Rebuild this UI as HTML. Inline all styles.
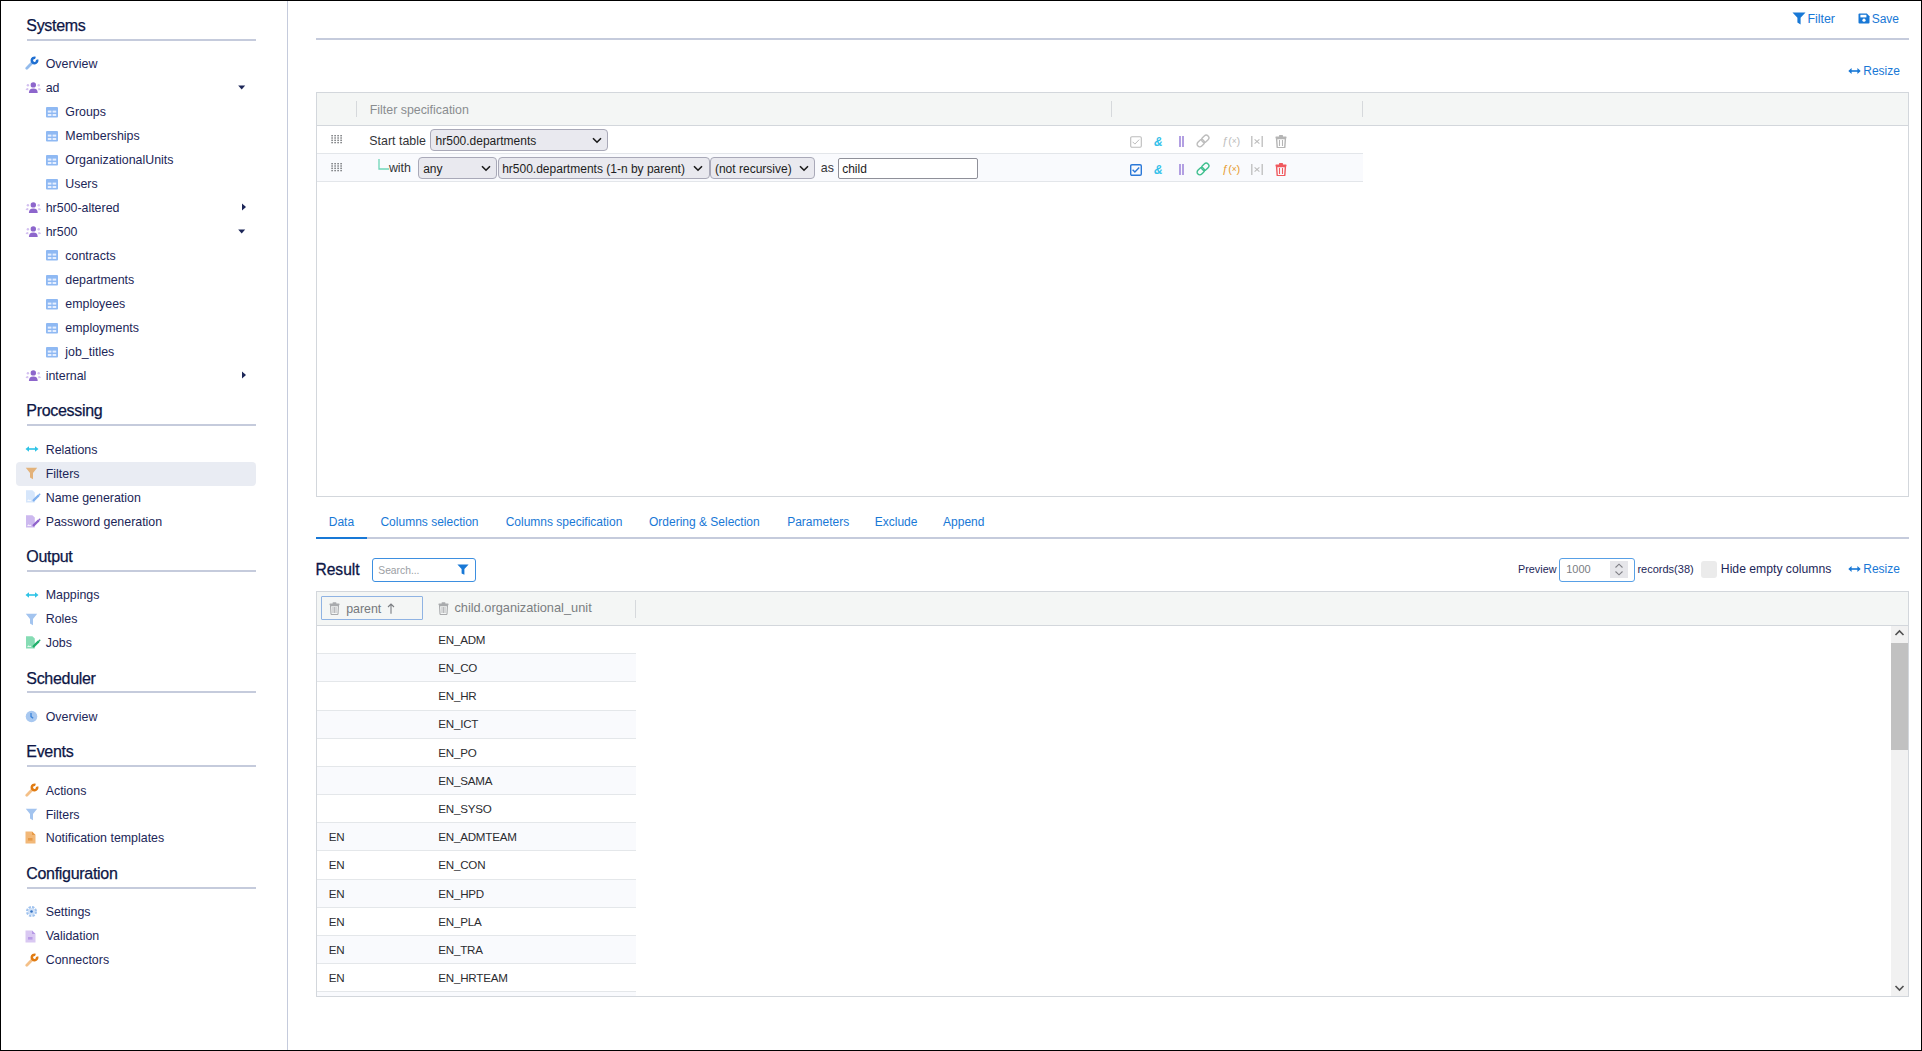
<!DOCTYPE html>
<html><head><meta charset="utf-8">
<style>
*{box-sizing:border-box;margin:0;padding:0}
html,body{width:1922px;height:1051px;overflow:hidden;background:#fff}
body{font-family:"Liberation Sans",sans-serif;position:relative}
.t{position:absolute;white-space:nowrap;line-height:1}
.r{position:absolute;display:block}
.frame{position:absolute;left:0;top:0;width:1922px;height:1051px;border:1px solid #000;z-index:50}
</style></head><body>
<div class="r" style="left:287px;top:0px;width:1px;height:1051px;background:#c5cbdc"></div>
<div class="t " style="left:26.28px;top:17.96px;font-size:16px;color:#0d1646;letter-spacing:-0.3px;-webkit-text-stroke:0.25px #0d1646">Systems</div>
<div class="r" style="left:27px;top:39px;width:229px;height:2px;background:#c5cbdc"></div>
<div class="t " style="left:26.28px;top:402.96px;font-size:16px;color:#0d1646;letter-spacing:-0.3px;-webkit-text-stroke:0.25px #0d1646">Processing</div>
<div class="r" style="left:27px;top:424px;width:229px;height:2px;background:#c5cbdc"></div>
<div class="t " style="left:26.28px;top:548.76px;font-size:16px;color:#0d1646;letter-spacing:-0.3px;-webkit-text-stroke:0.25px #0d1646">Output</div>
<div class="r" style="left:27px;top:570px;width:229px;height:2px;background:#c5cbdc"></div>
<div class="t " style="left:26.28px;top:670.66px;font-size:16px;color:#0d1646;letter-spacing:-0.3px;-webkit-text-stroke:0.25px #0d1646">Scheduler</div>
<div class="r" style="left:27px;top:691px;width:229px;height:2px;background:#c5cbdc"></div>
<div class="t " style="left:26.28px;top:744.36px;font-size:16px;color:#0d1646;letter-spacing:-0.3px;-webkit-text-stroke:0.25px #0d1646">Events</div>
<div class="r" style="left:27px;top:765px;width:229px;height:2px;background:#c5cbdc"></div>
<div class="t " style="left:26.28px;top:866.26px;font-size:16px;color:#0d1646;letter-spacing:-0.3px;-webkit-text-stroke:0.25px #0d1646">Configuration</div>
<div class="r" style="left:27px;top:887px;width:229px;height:2px;background:#c5cbdc"></div>
<div class="r" style="left:16px;top:462px;width:240px;height:24px;background:#e9ecf3;border-radius:4px"></div>
<div class="t " style="left:45.73px;top:58.20px;font-size:12.4px;color:#1c2658;">Overview</div>
<svg class="r" style="left:24.9px;top:56px" width="14" height="14" viewBox="0 0 14 14"><path d="M1.8 12.2 L7.4 6.6" stroke="#93bbec" stroke-width="2.8" stroke-linecap="round"/><path d="M12.04 3.58 A2.7 2.7 0 1 1 10.42 1.96" stroke="#1f6fd1" stroke-width="2.6" fill="none"/></svg>
<div class="t " style="left:45.73px;top:82.20px;font-size:12.4px;color:#1c2658;">ad</div>
<svg class="r" style="left:24.9px;top:82px" width="16" height="12" viewBox="0 0 16 12"><circle cx="8.3" cy="2.9" r="2.7" fill="#8d66cc"/><path d="M3.9 11 Q3.9 6.6 8.3 6.6 Q12.7 6.6 12.7 11 Z" fill="#8d66cc"/><circle cx="2.9" cy="3.2" r="1.2" fill="#d3c0f0"/><circle cx="13.7" cy="3.2" r="1.2" fill="#d3c0f0"/><path d="M0.6 8 Q1 5.8 3.2 6 L3.4 8.2 Z" fill="#d3c0f0"/><path d="M16 8 Q15.6 5.8 13.4 6 L13.2 8.2 Z" fill="#d3c0f0"/></svg>
<div class="t " style="left:65.33px;top:106.20px;font-size:12.4px;color:#1c2658;">Groups</div>
<svg class="r" style="left:46px;top:107px" width="12" height="11" viewBox="0 0 12 11"><rect x="0" y="0" width="12" height="10.5" rx="1" fill="#8fb9f3"/><rect x="1.8" y="3.6" width="3.6" height="2" fill="#e6efff"/><rect x="6.6" y="3.6" width="3.6" height="2" fill="#e6efff"/><rect x="1.8" y="7" width="3.6" height="2" fill="#e6efff"/><rect x="6.6" y="7" width="3.6" height="2" fill="#e6efff"/></svg>
<div class="t " style="left:65.33px;top:130.20px;font-size:12.4px;color:#1c2658;">Memberships</div>
<svg class="r" style="left:46px;top:131px" width="12" height="11" viewBox="0 0 12 11"><rect x="0" y="0" width="12" height="10.5" rx="1" fill="#8fb9f3"/><rect x="1.8" y="3.6" width="3.6" height="2" fill="#e6efff"/><rect x="6.6" y="3.6" width="3.6" height="2" fill="#e6efff"/><rect x="1.8" y="7" width="3.6" height="2" fill="#e6efff"/><rect x="6.6" y="7" width="3.6" height="2" fill="#e6efff"/></svg>
<div class="t " style="left:65.33px;top:154.20px;font-size:12.4px;color:#1c2658;">OrganizationalUnits</div>
<svg class="r" style="left:46px;top:155px" width="12" height="11" viewBox="0 0 12 11"><rect x="0" y="0" width="12" height="10.5" rx="1" fill="#8fb9f3"/><rect x="1.8" y="3.6" width="3.6" height="2" fill="#e6efff"/><rect x="6.6" y="3.6" width="3.6" height="2" fill="#e6efff"/><rect x="1.8" y="7" width="3.6" height="2" fill="#e6efff"/><rect x="6.6" y="7" width="3.6" height="2" fill="#e6efff"/></svg>
<div class="t " style="left:65.33px;top:178.20px;font-size:12.4px;color:#1c2658;">Users</div>
<svg class="r" style="left:46px;top:179px" width="12" height="11" viewBox="0 0 12 11"><rect x="0" y="0" width="12" height="10.5" rx="1" fill="#8fb9f3"/><rect x="1.8" y="3.6" width="3.6" height="2" fill="#e6efff"/><rect x="6.6" y="3.6" width="3.6" height="2" fill="#e6efff"/><rect x="1.8" y="7" width="3.6" height="2" fill="#e6efff"/><rect x="6.6" y="7" width="3.6" height="2" fill="#e6efff"/></svg>
<div class="t " style="left:45.73px;top:202.20px;font-size:12.4px;color:#1c2658;">hr500-altered</div>
<svg class="r" style="left:24.9px;top:202px" width="16" height="12" viewBox="0 0 16 12"><circle cx="8.3" cy="2.9" r="2.7" fill="#8d66cc"/><path d="M3.9 11 Q3.9 6.6 8.3 6.6 Q12.7 6.6 12.7 11 Z" fill="#8d66cc"/><circle cx="2.9" cy="3.2" r="1.2" fill="#d3c0f0"/><circle cx="13.7" cy="3.2" r="1.2" fill="#d3c0f0"/><path d="M0.6 8 Q1 5.8 3.2 6 L3.4 8.2 Z" fill="#d3c0f0"/><path d="M16 8 Q15.6 5.8 13.4 6 L13.2 8.2 Z" fill="#d3c0f0"/></svg>
<div class="t " style="left:45.73px;top:226.20px;font-size:12.4px;color:#1c2658;">hr500</div>
<svg class="r" style="left:24.9px;top:226px" width="16" height="12" viewBox="0 0 16 12"><circle cx="8.3" cy="2.9" r="2.7" fill="#8d66cc"/><path d="M3.9 11 Q3.9 6.6 8.3 6.6 Q12.7 6.6 12.7 11 Z" fill="#8d66cc"/><circle cx="2.9" cy="3.2" r="1.2" fill="#d3c0f0"/><circle cx="13.7" cy="3.2" r="1.2" fill="#d3c0f0"/><path d="M0.6 8 Q1 5.8 3.2 6 L3.4 8.2 Z" fill="#d3c0f0"/><path d="M16 8 Q15.6 5.8 13.4 6 L13.2 8.2 Z" fill="#d3c0f0"/></svg>
<div class="t " style="left:65.33px;top:250.20px;font-size:12.4px;color:#1c2658;">contracts</div>
<svg class="r" style="left:46px;top:250px" width="12" height="11" viewBox="0 0 12 11"><rect x="0" y="0" width="12" height="10.5" rx="1" fill="#8fb9f3"/><rect x="1.8" y="3.6" width="3.6" height="2" fill="#e6efff"/><rect x="6.6" y="3.6" width="3.6" height="2" fill="#e6efff"/><rect x="1.8" y="7" width="3.6" height="2" fill="#e6efff"/><rect x="6.6" y="7" width="3.6" height="2" fill="#e6efff"/></svg>
<div class="t " style="left:65.33px;top:274.20px;font-size:12.4px;color:#1c2658;">departments</div>
<svg class="r" style="left:46px;top:275px" width="12" height="11" viewBox="0 0 12 11"><rect x="0" y="0" width="12" height="10.5" rx="1" fill="#8fb9f3"/><rect x="1.8" y="3.6" width="3.6" height="2" fill="#e6efff"/><rect x="6.6" y="3.6" width="3.6" height="2" fill="#e6efff"/><rect x="1.8" y="7" width="3.6" height="2" fill="#e6efff"/><rect x="6.6" y="7" width="3.6" height="2" fill="#e6efff"/></svg>
<div class="t " style="left:65.33px;top:298.20px;font-size:12.4px;color:#1c2658;">employees</div>
<svg class="r" style="left:46px;top:299px" width="12" height="11" viewBox="0 0 12 11"><rect x="0" y="0" width="12" height="10.5" rx="1" fill="#8fb9f3"/><rect x="1.8" y="3.6" width="3.6" height="2" fill="#e6efff"/><rect x="6.6" y="3.6" width="3.6" height="2" fill="#e6efff"/><rect x="1.8" y="7" width="3.6" height="2" fill="#e6efff"/><rect x="6.6" y="7" width="3.6" height="2" fill="#e6efff"/></svg>
<div class="t " style="left:65.33px;top:322.20px;font-size:12.4px;color:#1c2658;">employments</div>
<svg class="r" style="left:46px;top:323px" width="12" height="11" viewBox="0 0 12 11"><rect x="0" y="0" width="12" height="10.5" rx="1" fill="#8fb9f3"/><rect x="1.8" y="3.6" width="3.6" height="2" fill="#e6efff"/><rect x="6.6" y="3.6" width="3.6" height="2" fill="#e6efff"/><rect x="1.8" y="7" width="3.6" height="2" fill="#e6efff"/><rect x="6.6" y="7" width="3.6" height="2" fill="#e6efff"/></svg>
<div class="t " style="left:65.33px;top:346.20px;font-size:12.4px;color:#1c2658;">job_titles</div>
<svg class="r" style="left:46px;top:347px" width="12" height="11" viewBox="0 0 12 11"><rect x="0" y="0" width="12" height="10.5" rx="1" fill="#8fb9f3"/><rect x="1.8" y="3.6" width="3.6" height="2" fill="#e6efff"/><rect x="6.6" y="3.6" width="3.6" height="2" fill="#e6efff"/><rect x="1.8" y="7" width="3.6" height="2" fill="#e6efff"/><rect x="6.6" y="7" width="3.6" height="2" fill="#e6efff"/></svg>
<div class="t " style="left:45.73px;top:370.20px;font-size:12.4px;color:#1c2658;">internal</div>
<svg class="r" style="left:24.9px;top:370px" width="16" height="12" viewBox="0 0 16 12"><circle cx="8.3" cy="2.9" r="2.7" fill="#8d66cc"/><path d="M3.9 11 Q3.9 6.6 8.3 6.6 Q12.7 6.6 12.7 11 Z" fill="#8d66cc"/><circle cx="2.9" cy="3.2" r="1.2" fill="#d3c0f0"/><circle cx="13.7" cy="3.2" r="1.2" fill="#d3c0f0"/><path d="M0.6 8 Q1 5.8 3.2 6 L3.4 8.2 Z" fill="#d3c0f0"/><path d="M16 8 Q15.6 5.8 13.4 6 L13.2 8.2 Z" fill="#d3c0f0"/></svg>
<div class="t " style="left:45.73px;top:444.30px;font-size:12.4px;color:#1c2658;">Relations</div>
<svg class="r" style="left:24.9px;top:445px" width="14" height="8" viewBox="0 0 14 8"><path d="M3 4 H11" stroke="#2ec3e6" stroke-width="1.6"/><path d="M0.5 4 L4 1.2 V6.8Z M13.5 4 L10 1.2 V6.8Z" fill="#2ec3e6"/></svg>
<div class="t " style="left:45.73px;top:468.30px;font-size:12.4px;color:#1c2658;">Filters</div>
<svg class="r" style="left:24.9px;top:467px" width="14" height="13" viewBox="0 0 14 13"><path d="M0.8 0.8 H12.2 L8 6 V12.2 L5 10.6 V6 Z" fill="#e3b27a"/></svg>
<div class="t " style="left:45.73px;top:492.10px;font-size:12.4px;color:#1c2658;">Name generation</div>
<svg class="r" style="left:24.9px;top:490px" width="16" height="14" viewBox="0 0 16 14"><path d="M1 0.2 H7.4 L9.8 2.6 V12.6 H1 Z" fill="#d6e6fb"/><path d="M2 11 L3.6 9.2 L4.6 10.2 L5.4 9.6 L6.4 11 Z" fill="#ffffff" opacity="0.8"/><path d="M8.6 10.4 L13.4 5.6" stroke="#7fb0ee" stroke-width="2.2" stroke-linecap="round"/><circle cx="14.6" cy="4.3" r="0.9" fill="#7fb0ee"/></svg>
<div class="t " style="left:45.73px;top:516.20px;font-size:12.4px;color:#1c2658;">Password generation</div>
<svg class="r" style="left:24.9px;top:515px" width="16" height="14" viewBox="0 0 16 14"><path d="M1 0.2 H7.4 L9.8 2.6 V12.6 H1 Z" fill="#cdb9ef"/><path d="M2 11 L3.6 9.2 L4.6 10.2 L5.4 9.6 L6.4 11 Z" fill="#ffffff" opacity="0.8"/><path d="M8.6 10.4 L13.4 5.6" stroke="#8f63cb" stroke-width="2.2" stroke-linecap="round"/><circle cx="14.6" cy="4.3" r="0.9" fill="#8f63cb"/></svg>
<div class="t " style="left:45.73px;top:589.20px;font-size:12.4px;color:#1c2658;">Mappings</div>
<svg class="r" style="left:24.9px;top:591px" width="14" height="8" viewBox="0 0 14 8"><path d="M3 4 H11" stroke="#2ec3e6" stroke-width="1.6"/><path d="M0.5 4 L4 1.2 V6.8Z M13.5 4 L10 1.2 V6.8Z" fill="#2ec3e6"/></svg>
<div class="t " style="left:45.73px;top:613.20px;font-size:12.4px;color:#1c2658;">Roles</div>
<svg class="r" style="left:24.9px;top:613px" width="14" height="13" viewBox="0 0 14 13"><path d="M0.8 0.8 H12.2 L8 6 V12.2 L5 10.6 V6 Z" fill="#a3c4ef"/></svg>
<div class="t " style="left:45.73px;top:637.10px;font-size:12.4px;color:#1c2658;">Jobs</div>
<svg class="r" style="left:24.9px;top:636px" width="16" height="14" viewBox="0 0 16 14"><path d="M1 0.2 H7.4 L9.8 2.6 V12.6 H1 Z" fill="#86dcb4"/><path d="M2 11 L3.6 9.2 L4.6 10.2 L5.4 9.6 L6.4 11 Z" fill="#ffffff" opacity="0.8"/><path d="M8.6 10.4 L13.4 5.6" stroke="#1fae6a" stroke-width="2.2" stroke-linecap="round"/><circle cx="14.6" cy="4.3" r="0.9" fill="#1fae6a"/></svg>
<div class="t " style="left:45.73px;top:711.10px;font-size:12.4px;color:#1c2658;">Overview</div>
<svg class="r" style="left:24.9px;top:710px" width="13" height="13" viewBox="0 0 13 13"><circle cx="6.5" cy="6.5" r="5.8" fill="#a8c8f0"/><path d="M6 3 V6.6 L8.2 8.2" stroke="#3a84da" stroke-width="1.3" fill="none"/></svg>
<div class="t " style="left:45.73px;top:785.00px;font-size:12.4px;color:#1c2658;">Actions</div>
<svg class="r" style="left:24.9px;top:783px" width="14" height="14" viewBox="0 0 14 14"><path d="M1.8 12.2 L7.4 6.6" stroke="#f4c088" stroke-width="2.8" stroke-linecap="round"/><path d="M12.04 3.58 A2.7 2.7 0 1 1 10.42 1.96" stroke="#e07b12" stroke-width="2.6" fill="none"/></svg>
<div class="t " style="left:45.73px;top:809.00px;font-size:12.4px;color:#1c2658;">Filters</div>
<svg class="r" style="left:24.9px;top:808px" width="14" height="13" viewBox="0 0 14 13"><path d="M0.8 0.8 H12.2 L8 6 V12.2 L5 10.6 V6 Z" fill="#a3c4ef"/></svg>
<div class="t " style="left:45.73px;top:832.10px;font-size:12.4px;color:#1c2658;">Notification templates</div>
<svg class="r" style="left:24.9px;top:831px" width="12" height="13" viewBox="0 0 12 13"><path d="M0.5 0.5 H7 L10.5 4 V12.5 H0.5 Z" fill="#f2b878"/><path d="M7 0.5 V4 H10.5Z" fill="#e69a48"/><rect x="3" y="7" width="4.5" height="2.6" fill="#e69a48"/></svg>
<div class="t " style="left:45.73px;top:906.10px;font-size:12.4px;color:#1c2658;">Settings</div>
<svg class="r" style="left:24.9px;top:905px" width="13" height="13" viewBox="0 0 13 13"><circle cx="6.5" cy="6.5" r="4.2" fill="none" stroke="#9fc2ee" stroke-width="2.6" stroke-dasharray="2.2 1.1"/><circle cx="6.5" cy="6.5" r="3.5" fill="#cfe0f7"/><circle cx="6.5" cy="6.5" r="1.3" fill="#2f6fc2"/></svg>
<div class="t " style="left:45.73px;top:930.40px;font-size:12.4px;color:#1c2658;">Validation</div>
<svg class="r" style="left:24.9px;top:930px" width="12" height="13" viewBox="0 0 12 13"><path d="M0.5 0.5 H7 L10.5 4 V12.5 H0.5 Z" fill="#d9c8f2"/><path d="M7 0.5 V4 H10.5Z" fill="#b89ae6"/><rect x="3" y="7" width="4.5" height="2.6" fill="#b89ae6"/></svg>
<div class="t " style="left:45.73px;top:954.40px;font-size:12.4px;color:#1c2658;">Connectors</div>
<svg class="r" style="left:24.9px;top:953px" width="14" height="14" viewBox="0 0 14 14"><path d="M1.8 12.2 L7.4 6.6" stroke="#f4c088" stroke-width="2.8" stroke-linecap="round"/><path d="M12.04 3.58 A2.7 2.7 0 1 1 10.42 1.96" stroke="#e07b12" stroke-width="2.6" fill="none"/></svg>
<svg class="r" style="left:237px;top:84px" width="9" height="7" viewBox="0 0 9 7"><path d="M1.2 1.4 H8.2 L4.7 5.6 Z" fill="#1c2658"/></svg>
<svg class="r" style="left:241px;top:203px" width="6" height="8" viewBox="0 0 6 8"><path d="M1 0.5 V7.5 L5 4 Z" fill="#1c2658"/></svg>
<svg class="r" style="left:237px;top:228px" width="9" height="7" viewBox="0 0 9 7"><path d="M1.2 1.4 H8.2 L4.7 5.6 Z" fill="#1c2658"/></svg>
<svg class="r" style="left:241px;top:371px" width="6" height="8" viewBox="0 0 6 8"><path d="M1 0.5 V7.5 L5 4 Z" fill="#1c2658"/></svg>
<svg class="r" style="left:1792px;top:12px" width="14" height="13" viewBox="0 0 14 13"><path d="M0.5 0.5 H13.5 L8.6 5.8 V12.5 L5.4 10.4 V5.8 Z" fill="#1878d6"/></svg>
<div class="t " style="left:1807.43px;top:12.90px;font-size:12.4px;color:#1878d6;">Filter</div>
<svg class="r" style="left:1858px;top:13px" width="12" height="11" viewBox="0 0 12 11"><path d="M0.5 1.5 Q0.5 0.5 1.5 0.5 H8.8 L11.5 3.2 V9.5 Q11.5 10.5 10.5 10.5 H1.5 Q0.5 10.5 0.5 9.5 Z" fill="#1878d6"/><rect x="2.4" y="1.8" width="6" height="2.6" fill="#ffffff"/><circle cx="6" cy="7.2" r="1.6" fill="#ffffff"/></svg>
<div class="t " style="left:1871.66px;top:13.24px;font-size:12.0px;color:#1878d6;">Save</div>
<div class="r" style="left:316px;top:38px;width:1593px;height:2px;background:#c5cbdc"></div>
<svg class="r" style="left:1848px;top:67px" width="13" height="8" viewBox="0 0 13 8"><path d="M3 4 H10" stroke="#1878d6" stroke-width="1.6"/><path d="M0.3 4 L3.6 1 V7Z M12.7 4 L9.4 1 V7Z" fill="#1878d6"/></svg>
<div class="t " style="left:1863.26px;top:64.94px;font-size:12.0px;color:#1878d6;">Resize</div>
<div class="r" style="left:316px;top:92px;width:1593px;height:405px;border:1px solid #d3d7dc;background:#fff"></div>
<div class="r" style="left:317px;top:93px;width:1591px;height:32px;background:#f4f6f5"></div>
<div class="r" style="left:317px;top:125px;width:1591px;height:1px;background:#d3d7dc"></div>
<div class="r" style="left:356px;top:101px;width:1px;height:16px;background:#d6d9dc"></div>
<div class="r" style="left:1111px;top:101px;width:1px;height:16px;background:#d6d9dc"></div>
<div class="r" style="left:1362px;top:101px;width:1px;height:16px;background:#d6d9dc"></div>
<div class="t " style="left:369.73px;top:103.70px;font-size:12.4px;color:#8a8d90;">Filter specification</div>
<div class="r" style="left:317px;top:153px;width:1046px;height:1px;background:#e3e6ea"></div>
<div class="r" style="left:317px;top:154px;width:1046px;height:27px;background:#f9fafd"></div>
<div class="r" style="left:317px;top:181px;width:1046px;height:1px;background:#e3e6ea"></div>
<svg class="r" style="left:331px;top:135px" width="11" height="9" viewBox="0 0 11 9"><rect x="0.4" y="0.0" width="1.4" height="1.4" fill="#6d6f73"/><rect x="0.4" y="2.3" width="1.4" height="1.4" fill="#6d6f73"/><rect x="0.4" y="4.6" width="1.4" height="1.4" fill="#6d6f73"/><rect x="0.4" y="6.8999999999999995" width="1.4" height="1.4" fill="#6d6f73"/><rect x="3.4" y="0.0" width="1.4" height="1.4" fill="#6d6f73"/><rect x="3.4" y="2.3" width="1.4" height="1.4" fill="#6d6f73"/><rect x="3.4" y="4.6" width="1.4" height="1.4" fill="#6d6f73"/><rect x="3.4" y="6.8999999999999995" width="1.4" height="1.4" fill="#6d6f73"/><rect x="6.4" y="0.0" width="1.4" height="1.4" fill="#6d6f73"/><rect x="6.4" y="2.3" width="1.4" height="1.4" fill="#6d6f73"/><rect x="6.4" y="4.6" width="1.4" height="1.4" fill="#6d6f73"/><rect x="6.4" y="6.8999999999999995" width="1.4" height="1.4" fill="#6d6f73"/><rect x="9.4" y="0.0" width="1.4" height="1.4" fill="#6d6f73"/><rect x="9.4" y="2.3" width="1.4" height="1.4" fill="#6d6f73"/><rect x="9.4" y="4.6" width="1.4" height="1.4" fill="#6d6f73"/><rect x="9.4" y="6.8999999999999995" width="1.4" height="1.4" fill="#6d6f73"/></svg>
<svg class="r" style="left:331px;top:163px" width="11" height="9" viewBox="0 0 11 9"><rect x="0.4" y="0.0" width="1.4" height="1.4" fill="#6d6f73"/><rect x="0.4" y="2.3" width="1.4" height="1.4" fill="#6d6f73"/><rect x="0.4" y="4.6" width="1.4" height="1.4" fill="#6d6f73"/><rect x="0.4" y="6.8999999999999995" width="1.4" height="1.4" fill="#6d6f73"/><rect x="3.4" y="0.0" width="1.4" height="1.4" fill="#6d6f73"/><rect x="3.4" y="2.3" width="1.4" height="1.4" fill="#6d6f73"/><rect x="3.4" y="4.6" width="1.4" height="1.4" fill="#6d6f73"/><rect x="3.4" y="6.8999999999999995" width="1.4" height="1.4" fill="#6d6f73"/><rect x="6.4" y="0.0" width="1.4" height="1.4" fill="#6d6f73"/><rect x="6.4" y="2.3" width="1.4" height="1.4" fill="#6d6f73"/><rect x="6.4" y="4.6" width="1.4" height="1.4" fill="#6d6f73"/><rect x="6.4" y="6.8999999999999995" width="1.4" height="1.4" fill="#6d6f73"/><rect x="9.4" y="0.0" width="1.4" height="1.4" fill="#6d6f73"/><rect x="9.4" y="2.3" width="1.4" height="1.4" fill="#6d6f73"/><rect x="9.4" y="4.6" width="1.4" height="1.4" fill="#6d6f73"/><rect x="9.4" y="6.8999999999999995" width="1.4" height="1.4" fill="#6d6f73"/></svg>
<div class="t " style="left:369.33px;top:134.60px;font-size:12.4px;color:#333438;">Start table</div>
<div class="r" style="left:430px;top:129px;width:178px;height:22px;background:#e9e9ef;border:1px solid #a9a9b8;border-radius:4px"></div>
<div class="t " style="left:435.56px;top:134.94px;font-size:12.0px;color:#1d1d22;">hr500.departments</div>
<svg class="r" style="left:591.5px;top:137px" width="10" height="7" viewBox="0 0 10 7"><path d="M1 1.2 L5 5.2 L9 1.2" stroke="#1a1a1a" stroke-width="1.6" fill="none"/></svg>
<svg class="r" style="left:378px;top:159px" width="11" height="11" viewBox="0 0 11 11"><path d="M1 0 V10 H11" stroke="#6fd6b8" stroke-width="1.3" fill="none"/></svg>
<div class="t " style="left:388.93px;top:162.30px;font-size:12.4px;color:#333438;">with</div>
<div class="r" style="left:418px;top:157px;width:79px;height:22px;background:#e9e9ef;border:1px solid #a9a9b8;border-radius:4px"></div>
<div class="t " style="left:423.16px;top:162.64px;font-size:12.0px;color:#1d1d22;">any</div>
<svg class="r" style="left:480.5px;top:165px" width="10" height="7" viewBox="0 0 10 7"><path d="M1 1.2 L5 5.2 L9 1.2" stroke="#1a1a1a" stroke-width="1.6" fill="none"/></svg>
<div class="r" style="left:498px;top:157px;width:212px;height:22px;background:#e9e9ef;border:1px solid #a9a9b8;border-radius:4px"></div>
<div class="t " style="left:502.16px;top:162.64px;font-size:12.0px;color:#1d1d22;">hr500.departments (1-n by parent)</div>
<svg class="r" style="left:693.2px;top:165px" width="10" height="7" viewBox="0 0 10 7"><path d="M1 1.2 L5 5.2 L9 1.2" stroke="#1a1a1a" stroke-width="1.6" fill="none"/></svg>
<div class="r" style="left:710px;top:157px;width:105px;height:22px;background:#e9e9ef;border:1px solid #a9a9b8;border-radius:4px"></div>
<div class="t " style="left:714.96px;top:162.64px;font-size:12.0px;color:#1d1d22;">(not recursive)</div>
<svg class="r" style="left:798.5px;top:165px" width="10" height="7" viewBox="0 0 10 7"><path d="M1 1.2 L5 5.2 L9 1.2" stroke="#1a1a1a" stroke-width="1.6" fill="none"/></svg>
<div class="t " style="left:820.83px;top:162.30px;font-size:12.4px;color:#333438;">as</div>
<div class="r" style="left:838px;top:158px;width:140px;height:21px;background:#fff;border:1px solid #8f9099;border-radius:2px"></div>
<div class="t " style="left:842.16px;top:162.64px;font-size:12.0px;color:#1d1d22;">child</div>
<svg class="r" style="left:1130px;top:136px" width="12" height="12" viewBox="0 0 12 12"><rect x="0.7" y="0.7" width="10.6" height="10.6" rx="1.2" fill="none" stroke="#bdbdbd" stroke-width="1.1"/><path d="M2.6 5.8 L4.9 8.1 L9.2 3.6" stroke="#bdbdbd" stroke-width="1" fill="none"/></svg>
<div class="t " style="left:1154.00px;top:135.84px;font-size:12px;color:#35c1ea;font-style:italic;font-weight:bold">&amp;</div>
<div class="r" style="left:1179px;top:136px;width:1.599999999999909px;height:11px;background:#b29fe2"></div>
<div class="r" style="left:1182px;top:136px;width:1.599999999999909px;height:11px;background:#b29fe2"></div>
<svg class="r" style="left:1196px;top:134px" width="14" height="14" viewBox="0 0 14 14"><g transform="rotate(-45 7 7)"><rect x="-0.2" y="4.3" width="8" height="5.4" rx="2.7" fill="none" stroke="#bdbdbd" stroke-width="1.4"/><rect x="6.2" y="4.3" width="8" height="5.4" rx="2.7" fill="none" stroke="#bdbdbd" stroke-width="1.4"/></g></svg>
<div class="t " style="left:1222.30px;top:135.79px;font-size:11px;color:#bdbdbd;letter-spacing:-0.2px">ƒ(<span style="font-size:8.5px;vertical-align:1px">×</span>)</div>
<svg class="r" style="left:1251px;top:136px" width="12" height="11" viewBox="0 0 12 11"><path d="M0.8 0 V11 M11.2 0 V11" stroke="#bdbdbd" stroke-width="1.3"/><path d="M3.6 3.3 L8.4 7.7 M8.4 3.3 L3.6 7.7" stroke="#bdbdbd" stroke-width="1.1"/></svg>
<svg class="r" style="left:1275px;top:135px" width="12" height="13" viewBox="0 0 12 13"><rect x="0.5" y="1.6" width="11" height="1.6" rx="0.5" fill="#b5b5b5"/><rect x="4" y="0" width="4" height="2" rx="0.6" fill="#b5b5b5"/><path d="M1.6 3.6 H10.4 L9.8 12.2 Q9.7 12.8 9 12.8 H3 Q2.3 12.8 2.2 12.2 Z" fill="none" stroke="#b5b5b5" stroke-width="1.4"/><path d="M4.5 5 V11 M7.5 5 V11" stroke="#b5b5b5" stroke-width="1.1"/></svg>
<svg class="r" style="left:1130px;top:164px" width="12" height="12" viewBox="0 0 12 12"><rect x="0.7" y="0.7" width="10.6" height="10.6" rx="1.2" fill="none" stroke="#2b78d8" stroke-width="1.4"/><path d="M2.6 5.8 L4.9 8.1 L9.2 3.6" stroke="#2b78d8" stroke-width="1.4" fill="none"/></svg>
<div class="t " style="left:1154.00px;top:163.84px;font-size:12px;color:#35c1ea;font-style:italic;font-weight:bold">&amp;</div>
<div class="r" style="left:1179px;top:164px;width:1.599999999999909px;height:11px;background:#b29fe2"></div>
<div class="r" style="left:1182px;top:164px;width:1.599999999999909px;height:11px;background:#b29fe2"></div>
<svg class="r" style="left:1196px;top:162px" width="14" height="14" viewBox="0 0 14 14"><g transform="rotate(-45 7 7)"><rect x="-0.2" y="4.3" width="8" height="5.4" rx="2.7" fill="none" stroke="#3ebf8e" stroke-width="1.4"/><rect x="6.2" y="4.3" width="8" height="5.4" rx="2.7" fill="none" stroke="#3ebf8e" stroke-width="1.4"/></g></svg>
<div class="t " style="left:1222.30px;top:163.79px;font-size:11px;color:#e69a2e;letter-spacing:-0.2px">ƒ(<span style="font-size:8.5px;vertical-align:1px">×</span>)</div>
<svg class="r" style="left:1251px;top:164px" width="12" height="11" viewBox="0 0 12 11"><path d="M0.8 0 V11 M11.2 0 V11" stroke="#bdbdbd" stroke-width="1.3"/><path d="M3.6 3.3 L8.4 7.7 M8.4 3.3 L3.6 7.7" stroke="#bdbdbd" stroke-width="1.1"/></svg>
<svg class="r" style="left:1275px;top:163px" width="12" height="13" viewBox="0 0 12 13"><rect x="0.5" y="1.6" width="11" height="1.6" rx="0.5" fill="#f0595e"/><rect x="4" y="0" width="4" height="2" rx="0.6" fill="#f0595e"/><path d="M1.6 3.6 H10.4 L9.8 12.2 Q9.7 12.8 9 12.8 H3 Q2.3 12.8 2.2 12.2 Z" fill="none" stroke="#f0595e" stroke-width="1.4"/><path d="M4.5 5 V11 M7.5 5 V11" stroke="#f0595e" stroke-width="1.1"/></svg>
<div class="t " style="left:328.76px;top:516.04px;font-size:12.0px;color:#1878d6;">Data</div>
<div class="t " style="left:380.46px;top:516.04px;font-size:12.0px;color:#1878d6;">Columns selection</div>
<div class="t " style="left:505.66px;top:516.04px;font-size:12.0px;color:#1878d6;">Columns specification</div>
<div class="t " style="left:648.96px;top:516.04px;font-size:12.0px;color:#1878d6;">Ordering &amp; Selection</div>
<div class="t " style="left:787.16px;top:516.04px;font-size:12.0px;color:#1878d6;">Parameters</div>
<div class="t " style="left:874.76px;top:516.04px;font-size:12.0px;color:#1878d6;">Exclude</div>
<div class="t " style="left:943.06px;top:516.04px;font-size:12.0px;color:#1878d6;">Append</div>
<div class="r" style="left:316px;top:537px;width:1593px;height:2px;background:#c5cbdc"></div>
<div class="r" style="left:316px;top:536.5px;width:51px;height:2.5px;background:#1878d6"></div>
<div class="t " style="left:315.41px;top:562.19px;font-size:15.6px;color:#0d1646;-webkit-text-stroke:0.3px #0d1646">Result</div>
<div class="r" style="left:372px;top:558px;width:104px;height:24px;border:1.5px solid #3d8fe0;border-radius:3px;background:#fff"></div>
<div class="t " style="left:378.28px;top:565.58px;font-size:10.3px;color:#9b9ea3;">Search...</div>
<svg class="r" style="left:457px;top:564px" width="12" height="11" viewBox="0 0 12 11"><path d="M0.4 0.4 H11.6 L7.4 5 V10.8 L4.6 9.4 V5 Z" fill="#1878d6"/></svg>
<div class="t " style="left:1518.04px;top:563.76px;font-size:10.8px;color:#1c2658;">Preview</div>
<div class="r" style="left:1559px;top:558px;width:76px;height:24px;border:1.5px solid #58a0e6;border-radius:3px;background:#fff"></div>
<div class="t " style="left:1566.23px;top:563.59px;font-size:11.0px;color:#7a7d82;">1000</div>
<div class="r" style="left:1610px;top:561px;width:18px;height:17px;background:#e6e6ea"></div>
<svg class="r" style="left:1613px;top:562px" width="12" height="15" viewBox="0 0 12 15"><path d="M2.5 5.5 L6 2.2 L9.5 5.5 M2.5 9.5 L6 12.8 L9.5 9.5" stroke="#808086" stroke-width="1.1" fill="none"/></svg>
<div class="t " style="left:1637.43px;top:563.59px;font-size:11.0px;color:#1c2658;">records(38)</div>
<div class="r" style="left:1701px;top:561px;width:16px;height:17px;background:#ebebeb;border-radius:3px"></div>
<div class="t " style="left:1720.85px;top:562.57px;font-size:12.2px;color:#1c2658;">Hide empty columns</div>
<svg class="r" style="left:1848px;top:565px" width="13" height="8" viewBox="0 0 13 8"><path d="M3 4 H10" stroke="#1878d6" stroke-width="1.6"/><path d="M0.3 4 L3.6 1 V7Z M12.7 4 L9.4 1 V7Z" fill="#1878d6"/></svg>
<div class="t " style="left:1863.26px;top:563.24px;font-size:12.0px;color:#1878d6;">Resize</div>
<div class="r" style="left:316px;top:591px;width:1593px;height:406px;border:1px solid #d3d7dc;background:#fff"></div>
<div class="r" style="left:317px;top:592px;width:1591px;height:33px;background:#f4f6f5"></div>
<div class="r" style="left:317px;top:625px;width:1591px;height:1px;background:#d3d7dc"></div>
<div class="r" style="left:321px;top:596px;width:102px;height:24px;border:1px solid #8fb3e3;border-radius:1px"></div>
<svg class="r" style="left:329px;top:602px" width="11" height="13" viewBox="0 0 11 13"><rect x="0.5" y="1.5" width="10" height="1.4" rx="0.5" fill="#a9abad"/><rect x="3.6" y="0.2" width="3.8" height="1.8" rx="0.6" fill="#a9abad"/><path d="M1.5 3.6 H9.5 L9 12 Q8.9 12.5 8.4 12.5 H2.6 Q2.1 12.5 2 12 Z" fill="none" stroke="#a9abad" stroke-width="1.1"/><path d="M4 5 V11 M5.5 5 V11 M7 5 V11" stroke="#a9abad" stroke-width="0.8"/></svg>
<svg class="r" style="left:438px;top:602px" width="11" height="13" viewBox="0 0 11 13"><rect x="0.5" y="1.5" width="10" height="1.4" rx="0.5" fill="#a9abad"/><rect x="3.6" y="0.2" width="3.8" height="1.8" rx="0.6" fill="#a9abad"/><path d="M1.5 3.6 H9.5 L9 12 Q8.9 12.5 8.4 12.5 H2.6 Q2.1 12.5 2 12 Z" fill="none" stroke="#a9abad" stroke-width="1.1"/><path d="M4 5 V11 M5.5 5 V11 M7 5 V11" stroke="#a9abad" stroke-width="0.8"/></svg>
<div class="t " style="left:346.13px;top:602.80px;font-size:12.4px;color:#75787c;">parent</div>
<svg class="r" style="left:387px;top:603px" width="8" height="11" viewBox="0 0 8 11"><path d="M4 10.8 V1 M1 4 L4 1 L7 4" stroke="#7b7e82" stroke-width="1.1" fill="none"/></svg>
<div class="t " style="left:454.40px;top:602.46px;font-size:12.8px;color:#7b7e82;">child.organizational_unit</div>
<div class="r" style="left:635px;top:600px;width:1px;height:18px;background:#d6d9dc"></div>
<div class="r" style="left:317px;top:653px;width:319px;height:1px;background:#e4e7ea"></div>
<div class="t " style="left:438.19px;top:633.98px;font-size:11.6px;color:#2b2c30;letter-spacing:-0.2px">EN_ADM</div>
<div class="r" style="left:317px;top:654px;width:319px;height:27px;background:#f9fafd"></div>
<div class="r" style="left:317px;top:681px;width:319px;height:1px;background:#e4e7ea"></div>
<div class="t " style="left:438.19px;top:662.15px;font-size:11.6px;color:#2b2c30;letter-spacing:-0.2px">EN_CO</div>
<div class="r" style="left:317px;top:710px;width:319px;height:1px;background:#e4e7ea"></div>
<div class="t " style="left:438.19px;top:690.32px;font-size:11.6px;color:#2b2c30;letter-spacing:-0.2px">EN_HR</div>
<div class="r" style="left:317px;top:711px;width:319px;height:27px;background:#f9fafd"></div>
<div class="r" style="left:317px;top:738px;width:319px;height:1px;background:#e4e7ea"></div>
<div class="t " style="left:438.19px;top:718.49px;font-size:11.6px;color:#2b2c30;letter-spacing:-0.2px">EN_ICT</div>
<div class="r" style="left:317px;top:766px;width:319px;height:1px;background:#e4e7ea"></div>
<div class="t " style="left:438.19px;top:746.66px;font-size:11.6px;color:#2b2c30;letter-spacing:-0.2px">EN_PO</div>
<div class="r" style="left:317px;top:767px;width:319px;height:27px;background:#f9fafd"></div>
<div class="r" style="left:317px;top:794px;width:319px;height:1px;background:#e4e7ea"></div>
<div class="t " style="left:438.19px;top:774.83px;font-size:11.6px;color:#2b2c30;letter-spacing:-0.2px">EN_SAMA</div>
<div class="r" style="left:317px;top:822px;width:319px;height:1px;background:#e4e7ea"></div>
<div class="t " style="left:438.19px;top:803.00px;font-size:11.6px;color:#2b2c30;letter-spacing:-0.2px">EN_SYSO</div>
<div class="r" style="left:317px;top:823px;width:319px;height:27px;background:#f9fafd"></div>
<div class="r" style="left:317px;top:850px;width:319px;height:1px;background:#e4e7ea"></div>
<div class="t " style="left:328.69px;top:831.17px;font-size:11.6px;color:#2b2c30;letter-spacing:-0.2px">EN</div>
<div class="t " style="left:438.19px;top:831.17px;font-size:11.6px;color:#2b2c30;letter-spacing:-0.2px">EN_ADMTEAM</div>
<div class="r" style="left:317px;top:879px;width:319px;height:1px;background:#e4e7ea"></div>
<div class="t " style="left:328.69px;top:859.34px;font-size:11.6px;color:#2b2c30;letter-spacing:-0.2px">EN</div>
<div class="t " style="left:438.19px;top:859.34px;font-size:11.6px;color:#2b2c30;letter-spacing:-0.2px">EN_CON</div>
<div class="r" style="left:317px;top:880px;width:319px;height:27px;background:#f9fafd"></div>
<div class="r" style="left:317px;top:907px;width:319px;height:1px;background:#e4e7ea"></div>
<div class="t " style="left:328.69px;top:887.51px;font-size:11.6px;color:#2b2c30;letter-spacing:-0.2px">EN</div>
<div class="t " style="left:438.19px;top:887.51px;font-size:11.6px;color:#2b2c30;letter-spacing:-0.2px">EN_HPD</div>
<div class="r" style="left:317px;top:935px;width:319px;height:1px;background:#e4e7ea"></div>
<div class="t " style="left:328.69px;top:915.68px;font-size:11.6px;color:#2b2c30;letter-spacing:-0.2px">EN</div>
<div class="t " style="left:438.19px;top:915.68px;font-size:11.6px;color:#2b2c30;letter-spacing:-0.2px">EN_PLA</div>
<div class="r" style="left:317px;top:936px;width:319px;height:27px;background:#f9fafd"></div>
<div class="r" style="left:317px;top:963px;width:319px;height:1px;background:#e4e7ea"></div>
<div class="t " style="left:328.69px;top:943.85px;font-size:11.6px;color:#2b2c30;letter-spacing:-0.2px">EN</div>
<div class="t " style="left:438.19px;top:943.85px;font-size:11.6px;color:#2b2c30;letter-spacing:-0.2px">EN_TRA</div>
<div class="r" style="left:317px;top:991px;width:319px;height:1px;background:#e4e7ea"></div>
<div class="t " style="left:328.69px;top:972.02px;font-size:11.6px;color:#2b2c30;letter-spacing:-0.2px">EN</div>
<div class="t " style="left:438.19px;top:972.02px;font-size:11.6px;color:#2b2c30;letter-spacing:-0.2px">EN_HRTEAM</div>
<div class="r" style="left:317px;top:992px;width:319px;height:4px;background:#f9fafd"></div>
<div class="r" style="left:1891px;top:626px;width:17px;height:370px;background:#f1f1f1"></div>
<div class="r" style="left:1891px;top:643px;width:17px;height:107px;background:#c1c1c1"></div>
<svg class="r" style="left:1894px;top:629px" width="11" height="8" viewBox="0 0 11 8"><path d="M1.5 6 L5.5 2 L9.5 6" stroke="#505050" stroke-width="1.6" fill="none"/></svg>
<svg class="r" style="left:1894px;top:984px" width="11" height="8" viewBox="0 0 11 8"><path d="M1.5 2 L5.5 6 L9.5 2" stroke="#505050" stroke-width="1.6" fill="none"/></svg>
<div class="frame"></div>
</body></html>
